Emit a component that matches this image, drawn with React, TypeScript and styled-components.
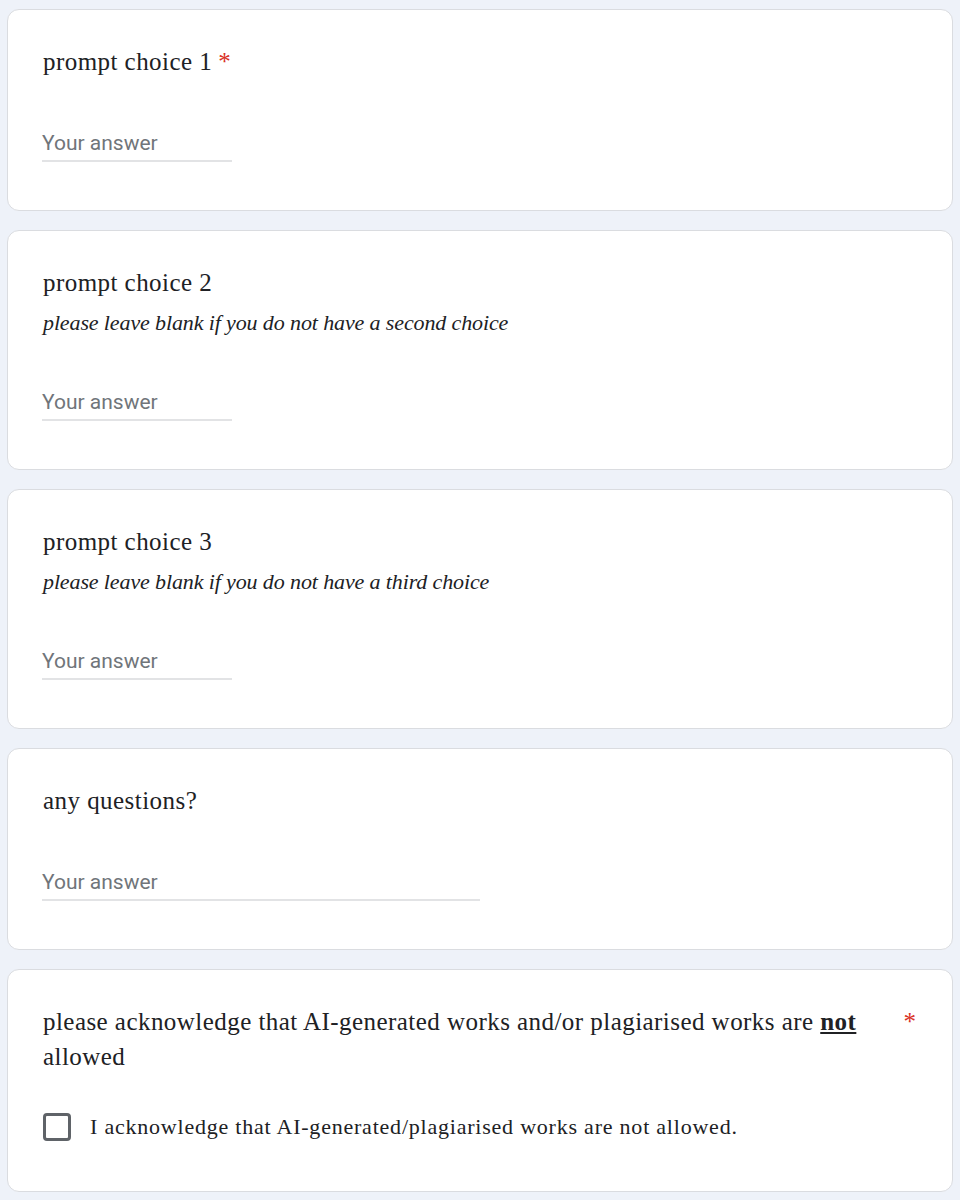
import React from 'react';
import styled, { createGlobalStyle } from 'styled-components';

const GlobalStyle = createGlobalStyle`
    html, body {
        margin: 0;
        padding: 0;
        background: #eef2f9;
    }
`

type Question = {
    id: number
    title: string
    required?: boolean
    description?: string
    wide?: boolean
}

const questions: Question[] = [
    { id: 1, title: 'prompt choice 1', required: true },
    { id: 2, title: 'prompt choice 2', description: 'please leave blank if you do not have a second choice' },
    { id: 3, title: 'prompt choice 3', description: 'please leave blank if you do not have a third choice' },
    { id: 4, title: 'any questions?', wide: true },
]

const App = () => {
    return (
        <Page>
            <GlobalStyle />
            {questions.map(q => <Card key={q.id}>
                <TitleRow>
                    <Title>
                        {q.title}
                        {q.required && <InlineStar>*</InlineStar>}
                    </Title>
                </TitleRow>
                {q.description && <Description>{q.description}</Description>}
                <AnswerField wide={q.wide}>Your answer</AnswerField>
            </Card>
            )}
            <Card last>
                <TitleRow>
                    <Title>
                        please acknowledge that AI-generated works and/or plagiarised works are <Strong>not</Strong> allowed
                    </Title>
                    <SideStar>*</SideStar>
                </TitleRow>
                <CheckRow>
                    <CheckBox />
                    <CheckLabel>I acknowledge that AI-generated/plagiarised works are not allowed.</CheckLabel>
                </CheckRow>
            </Card>
        </Page>
    );
};

export default App;

const Page = styled.div`
    display: flex;
    flex-direction: column;
    gap: 19px;
    padding: 9px 7px 9px 7px;
`
const Card = styled.div<{ last?: boolean }>`
    background: #ffffff;
    border: 1px solid #dadce0;
    border-radius: 12px;
    padding: 34px 36px ${p => p.last ? '46px' : '48px'} 35px;
`
const TitleRow = styled.div`
    display: flex;
    align-items: flex-start;
`
const Title = styled.div`
    flex: 0 1 auto;
    font-family: "Liberation Serif", "DejaVu Serif", serif;
    font-size: 25px;
    line-height: 35px;
    color: #202124;
    letter-spacing: 0.45px;
`
const Strong = styled.span`
    font-weight: 700;
    text-decoration: underline;
`
const InlineStar = styled.span`
    color: #d93025;
    padding-left: 6px;
`
const SideStar = styled.span`
    color: #d93025;
    font-family: "Liberation Serif", serif;
    font-size: 25px;
    line-height: 35px;
    padding-left: 42px;
    margin-left: auto;
`
const Description = styled.div`
    font-family: "Liberation Serif", "DejaVu Serif", serif;
    font-style: italic;
    font-size: 22px;
    line-height: 30px;
    margin-top: 8px;
    color: #202124;
    letter-spacing: -0.12px;
`
const AnswerField = styled.div<{ wide?: boolean }>`
    font-family: Roboto, "Liberation Sans", sans-serif;
    font-size: 21px;
    line-height: 32px;
    color: #70757a;
    margin-top: 48px;
    width: ${p => p.wide ? '438px' : '190px'};
    border-bottom: 2px solid #e2e3e5;
    padding-bottom: 1px;
    margin-left: -1px;
`
const CheckRow = styled.div`
    display: flex;
    align-items: center;
    gap: 19px;
    margin-top: 35px;
    height: 36px;
`
const CheckBox = styled.div`
    width: 22px;
    height: 22px;
    border: 3px solid #5f6368;
    border-radius: 4px;
    flex: none;
`
const CheckLabel = styled.div`
    font-family: "Liberation Serif", "DejaVu Serif", serif;
    font-size: 22px;
    color: #202124;
    letter-spacing: 0.78px;
`
